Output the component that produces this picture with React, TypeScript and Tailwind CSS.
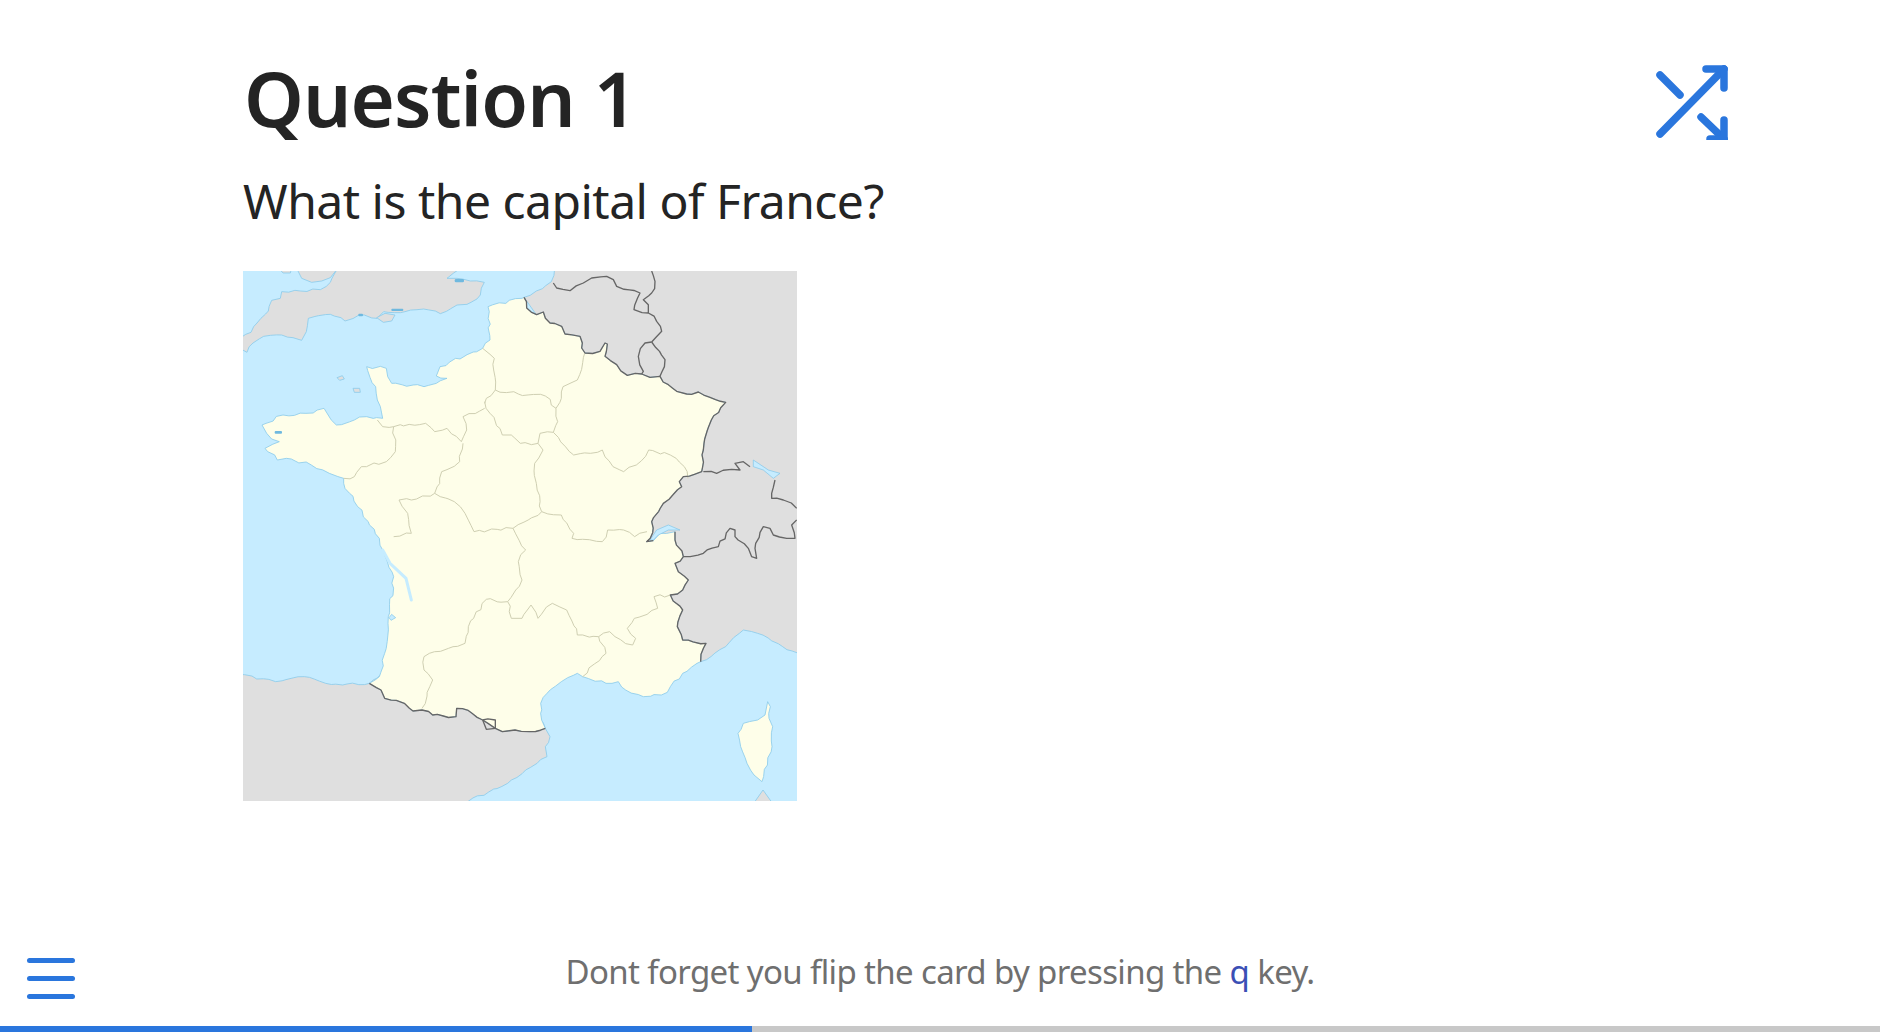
const france =
  "843,79 851,111 881,131 901,123 921,156 956,166 966,189 1011,196 1016,231 1026,246 1071,241 1086,216 1093,219 1086,256 1121,281 1153,313 1196,309 1221,319 1251,316 1276,341 1301,361 1331,369 1366,363 1401,379 1448,394 1405,447 1383,517 1381,537 1376,602 1321,617 1309,632 1316,647 1261,697 1226,752 1229,785 1211,812 1231,809 1251,787 1296,782 1296,807 1321,857 1296,877 1306,902 1336,927 1319,957 1282,972 1319,1017 1303,1067 1319,1107 1389,1117 1373,1172 1362,1177 1319,1207 1282,1247 1255,1272 1201,1277 1148,1257 1126,1232 1089,1237 1019,1217 1003,1207 955,1232 912,1267 893,1297 896,1347 907,1372 859,1382 816,1377 778,1382 757,1372 719,1347 687,1327 641,1312 639,1337 601,1335 569,1332 537,1317 510,1320 484,1297 425,1282 414,1257 379,1237 409,1217 425,1147 435,1057 452,917 419,837 409,802 344,707 302,637 302,622 259,607 205,582 130,562 103,567 66,532 109,512 71,487 57,462 120,432 189,427 243,412 280,462 334,447 371,437 419,442 403,387 398,347 371,287 430,292 446,337 543,347 612,322 580,315 591,287 719,232 741,207 735,107 837,82";

const england =
  "286,-10 262,34 232,56 172,60 116,62 112,82 86,88 76,120 42,156 24,184 -10,202 -10,232 12,244 30,216 62,196 116,192 150,200 176,208 190,182 196,142 262,130 306,150 348,132 402,142 422,122 486,122 542,114 592,128 642,102 672,100 712,72 724,34 682,30 642,22 612,22 632,6 666,-10";

const eastLand =
  "843,79 880,60 925,32 935,-10 1680,-10 1680,1157 1619,1127 1544,1087 1501,1077 1448,1127 1373,1172 1000,1000 1000,300";

const spain =
  "-10,1210 98,1232 184,1217 248,1237 312,1239 379,1237 500,1150 800,1200 907,1372 921,1397 907,1427 912,1457 848,1497 794,1537 677,1590 640,1610 -10,1610";

const corsica =
  "1574,1292 1582,1307 1578,1342 1589,1367 1587,1427 1557,1532 1533,1512 1512,1477 1493,1427 1485,1387 1501,1357 1544,1347 1566,1332";

const northBorder =
  "843,79 851,111 881,131 901,123 921,156 956,166 966,189 1011,196 1016,231 1026,246 1071,241 1086,216 1093,219 1086,256 1121,281 1153,313 1196,309 1221,319 1251,316 1276,341 1301,361 1331,369 1366,363 1401,379 1448,394 1405,447 1383,517 1381,537 1376,602 1321,617 1309,632 1316,647 1261,697 1226,752 1229,785 1211,812 1231,809";

const otherBorders = [
  "1296,782 1296,807 1321,857 1296,877 1306,902 1336,927 1319,957 1282,972 1319,1017 1303,1067 1319,1107 1389,1117 1373,1172",
  "379,1237 414,1257 425,1282 484,1297 510,1320 537,1317 569,1332 601,1335 639,1337 641,1312 687,1327 719,1347 757,1372 778,1382 816,1377 859,1382 907,1372",
  "719,1347 757,1347 757,1372 730,1375 719,1347",
  "931,36 941,51 981,59 1021,36 1046,21 1091,16 1111,26 1121,46 1191,66 1173,116 1216,126 1241,151 1256,181 1226,213",
  "1226,213 1206,216 1186,256 1201,301 1196,309",
  "1226,213 1266,266 1251,316",
  "1226,0 1236,31 1226,66 1201,86 1216,101 1216,126",
  "1381,602 1421,607 1466,595 1491,597 1476,577 1501,572 1521,587",
  "1596,627 1586,667 1586,682 1621,687 1661,712",
  "1321,857 1381,847 1426,827 1461,772 1476,777 1476,797 1516,832 1526,857 1541,862 1536,832 1561,767 1581,772 1591,792 1631,802 1656,802 1646,762 1661,747",
];

const regions = [
  "719,232 754,262 752,297 757,357 730,382 725,397",
  "757,357 826,369 907,375 939,412",
  "1025,247 1003,327 960,347 955,382 939,412",
  "939,412 944,452 931,484",
  "931,484 891,487 885,517 832,517 805,492 778,492 741,427 725,392",
  "725,412 660,437 671,477 655,512",
  "403,447 419,467 452,467 548,457 575,482 612,472 655,512",
  "452,467 457,542 430,572 355,587 334,617 302,622",
  "660,517 650,572 596,602 575,667",
  "575,667 505,687 468,687 494,727 505,787 452,797",
  "575,667 634,692 666,727 693,782 810,772",
  "885,517 900,537 875,577 880,637 896,722 810,772",
  "931,484 992,552 1078,537 1110,587 1142,602 1180,582 1217,537 1282,552 1324,587 1335,622",
  "896,722 955,732 992,787 987,802 1078,812 1094,777 1142,777 1175,797 1212,782",
  "810,772 848,837 826,872 837,927 794,992 730,985 676,1067 666,1117 559,1147 543,1157 543,1197 569,1227 537,1312",
  "794,992 805,1042 837,1042 864,1002 885,1042 928,997 971,1017 1003,1092 1067,1097 1089,1147 1019,1217",
  "1067,1097 1100,1082 1116,1097 1169,1122 1178,1102 1153,1072 1174,1042 1244,1012 1233,977 1282,972",
];

// roughens straight segments so the borders look hand traced
function rough(points: string, amount: number) {
  const list = points.split(" ").map((p) => p.split(",").map(Number));
  const out: string[] = [];
  list.forEach(([x, y], i) => {
    out.push(`${x},${y}`);
    const next = list[i + 1];
    if (!next) return;
    const steps = Math.floor(Math.hypot(next[0] - x, next[1] - y) / 16);
    for (let s = 1; s < steps; s++) {
      const px = Math.round(x + ((next[0] - x) * s) / steps);
      const py = Math.round(y + ((next[1] - y) * s) / steps);
      const dx = Math.sin(px * 12.9 + py * 78.2) * amount;
      const dy = Math.sin(px * 39.3 + py * 11.1) * amount;
      out.push(`${(px + dx).toFixed(1)},${(py + dy).toFixed(1)}`);
    }
  });
  return out.join(" ");
}

function FranceMap() {
  return (
    <div className="w-[554px] h-[530px] overflow-hidden shrink-0">
      <svg
        viewBox="0 0 1662 1590"
        className="block w-full h-full blur-[0.6px]"
        preserveAspectRatio="none"
      >
        <rect width="1662" height="1590" fill="#c6ecff" />
        <g fill="#dfdfdf" stroke="#8ccbea" strokeWidth="2.5" strokeLinejoin="round">
          <polygon points={rough(england, 3)} />
          <polygon points="160,-10 176,22 206,34 236,30 262,20 286,-10" />
          <polygon points="106,-10 120,6 142,6 146,-10" />
          <polygon points="401,140 426,127 456,132 446,150 421,154" />
          <polygon points="282,320 298,314 304,324 290,328" />
          <polygon points="330,352 350,352 352,364 334,364" />
          <polygon points={rough(eastLand, 3)} />
          <polygon points={rough(spain, 3)} />
          <polygon points="1523,1610 1560,1557 1598,1610" />
        </g>
        <g fill="#fefee9" stroke="#8ccbea" strokeWidth="2.5" strokeLinejoin="round">
          <polygon points={rough(france, 4)} />
          <polygon points={rough(corsica, 3)} />
        </g>
        <g fill="#c6ecff" stroke="#7fc4e8" strokeWidth="2" strokeLinejoin="round">
          <polygon points="1221,807 1241,777 1276,762 1311,777 1276,777 1246,792 1231,807" />
          <polygon points="1531,567 1576,597 1611,607 1591,622 1561,597 1531,587" />
          <polygon points="446,1030 458,1040 444,1048 438,1040" />
        </g>
        <polyline
          points="419,837 441,877 489,922 505,987"
          fill="none"
          stroke="#c6ecff"
          strokeWidth="9"
          strokeLinecap="round"
        />
        <g fill="#6fb9df">
          <rect x="346" y="128" width="14" height="8" rx="3" />
          <rect x="445" y="113" width="36" height="7" rx="3" />
          <rect x="635" y="24" width="28" height="10" rx="4" />
          <rect x="95" y="480" width="22" height="8" rx="3" />
        </g>
        <g fill="none" stroke="#cfcfb2" strokeWidth="3" strokeLinejoin="round">
          {regions.map((points, index) => (
            <polyline key={index} points={rough(points, 4)} />
          ))}
        </g>
        <g fill="none" stroke="#666666" strokeWidth="4" strokeLinejoin="round">
          <polyline points={rough(northBorder, 4)} />
          {otherBorders.map((points, index) => (
            <polyline key={index} points={rough(points, 4)} />
          ))}
        </g>
      </svg>
    </div>
  );
}

function ShuffleIcon() {
  return (
    <svg
      viewBox="0 0 84 78"
      className="w-[84px] h-[78px] mt-[62px]"
      fill="none"
      stroke="#2a76dd"
      strokeWidth="7.5"
      strokeLinecap="round"
      strokeLinejoin="round"
    >
      <path d="M7 72 L71 7" />
      <path d="M53 7 L71 7 L71 26" />
      <path d="M7 13 L27 33" />
      <path d="M48 55 L71 77" />
      <path d="M57 77 L71 77 L71 58" />
    </svg>
  );
}

export default function App() {
  return (
    <div
      className="h-screen flex flex-col bg-white overflow-hidden"
      style={{ fontFamily: '"Noto Sans", sans-serif' }}
    >
      <main className="flex-1 pl-[243px] pr-[143px]">
        <div className="flex justify-between items-start">
          <div>
            <h1 className="mt-[50px] ml-[1px] text-[76px] leading-[96px] font-semibold tracking-[-0.9px] text-[#242424]">
              Question 1
            </h1>
            <p className="mt-[25px] text-[48px] leading-[60px] tracking-[-0.5px] text-[#242424]">
              What is the capital of France?
            </p>
          </div>
          <ShuffleIcon />
        </div>
        <div className="mt-[40px]">
          <FranceMap />
        </div>
      </main>
      <footer className="grid grid-cols-[1fr_auto_1fr] items-center h-[96px] pl-[27px]">
        <div className="flex flex-col gap-[13px] w-[48px]">
          <span className="block h-[5px] rounded-full bg-[#2a76dd]" />
          <span className="block h-[5px] rounded-full bg-[#2a76dd]" />
          <span className="block h-[5px] rounded-full bg-[#2a76dd]" />
        </div>
        <p className="text-[33px] leading-[44px] tracking-[-0.64px] text-[#6f6f6f] -mt-[12px] -ml-[27px]">
          Dont forget you flip the card by pressing the{" "}
          <span className="text-[#3b4fb5]">q</span> key.
        </p>
        <div />
      </footer>
      <div className="flex h-[6px] bg-[#c8c8c8]">
        <div className="w-[752px] bg-[#2a76dd]" />
      </div>
    </div>
  );
}
